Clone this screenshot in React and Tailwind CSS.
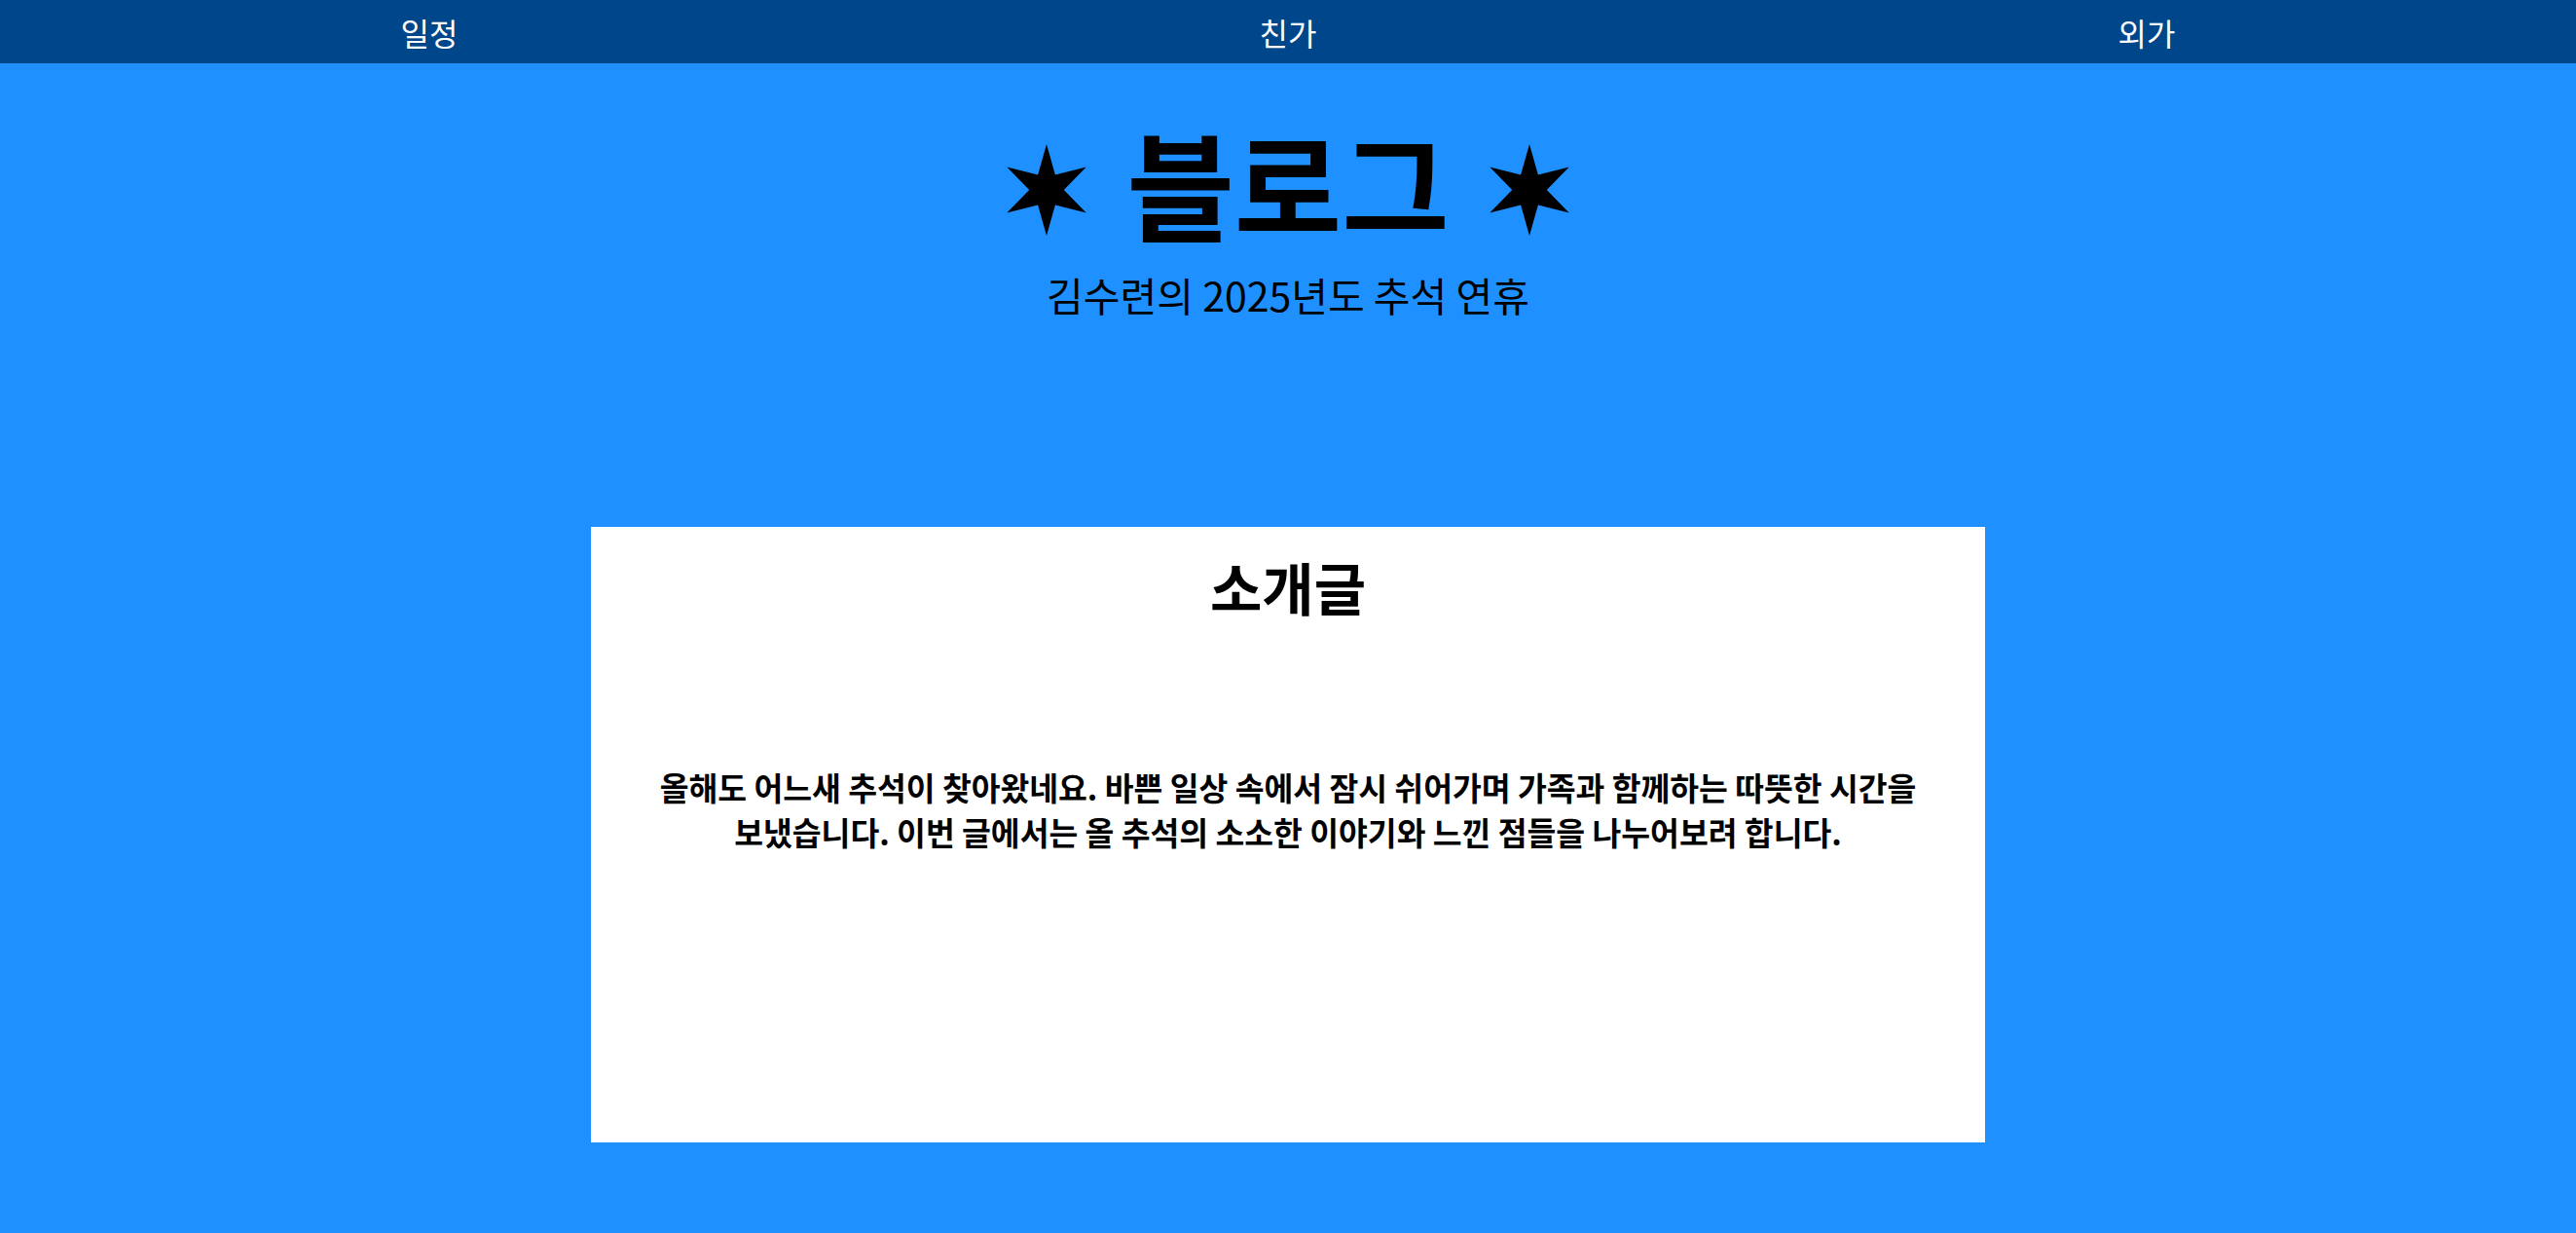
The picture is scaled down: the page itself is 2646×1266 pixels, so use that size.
function Star() {
  return (
    <svg width="84" height="96" viewBox="-42 -48 84 96" className="mt-[15px] shrink-0">
      <polygon
        fill="#000"
        points="0,-47 8.9,-15.4 40.7,-23.5 17.8,0 40.7,23.5 8.9,15.4 0,47 -8.9,15.4 -40.7,23.5 -17.8,0 -40.7,-23.5 -8.9,-15.4"
      />
    </svg>
  )
}

export default function App() {
  return (
    <div className="min-h-screen bg-[#1e90ff] font-['Noto_Sans_CJK_KR',sans-serif] text-black">
      <nav className="flex h-[65px] items-center bg-[#00468b] text-[32px] text-white">
        {['일정', '친가', '외가'].map(t => (
          <div key={t} className="flex-1 text-center leading-none">{t}</div>
        ))}
      </nav>

      <header className="flex flex-col items-center pt-[62px]">
        <div className="flex items-center gap-[40px]">
          <Star />
          <h1 className="text-[120px] font-bold leading-none">블로그</h1>
          <Star />
        </div>
        <p className="mt-[35px] text-[41px] leading-none">김수련의 2025년도 추석 연휴</p>
      </header>

      <main className="mx-auto mt-[218px] h-[632px] w-[1432px] bg-white px-[40px] pt-[32px] text-center">
        <h2 className="text-[58px] font-bold leading-none">소개글</h2>
        <p className="mt-[154px] break-keep text-[32.4px] font-bold leading-[46px]">
          올해도 어느새 추석이 찾아왔네요. 바쁜 일상 속에서 잠시 쉬어가며 가족과 함께하는 따뜻한 시간을 보냈습니다. 이번 글에서는 올 추석의 소소한 이야기와 느낀 점들을 나누어보려 합니다.
        </p>
      </main>
    </div>
  )
}
